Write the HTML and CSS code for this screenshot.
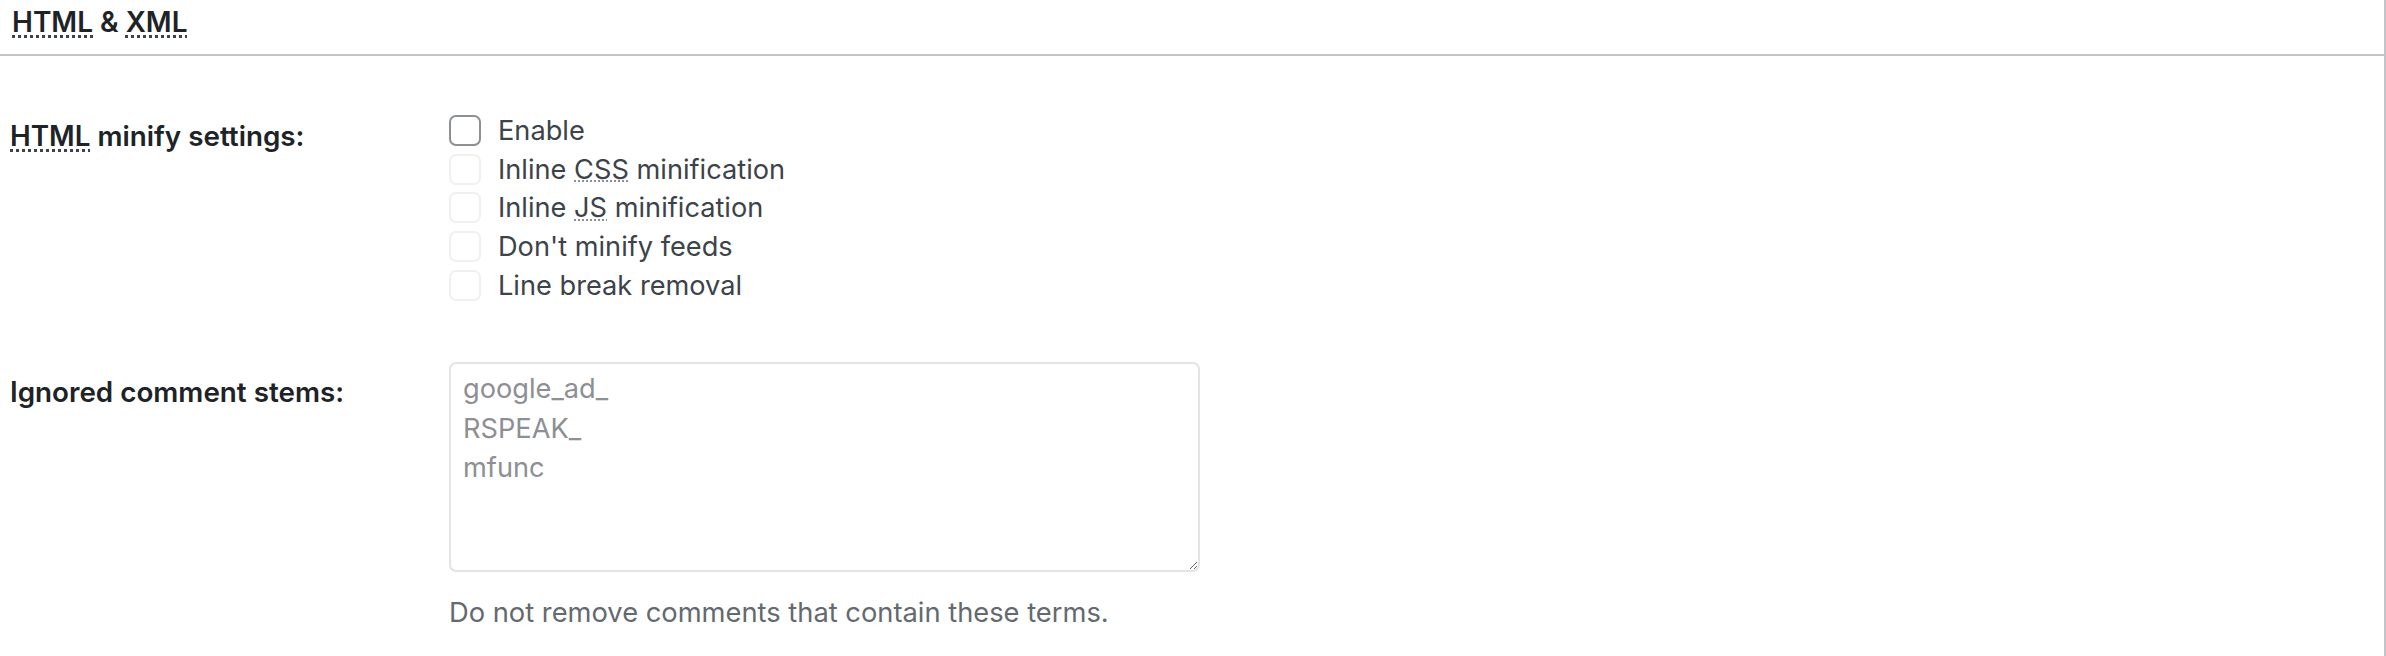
FILE: index.html
```html
<!DOCTYPE html>
<html lang="en">
<head>
<meta charset="utf-8">
<title>HTML &amp; XML</title>
<link rel="stylesheet" href="styles.css">
</head>
<body>
<div class="panel">
  <h3 class="panel-title"><abbr title="Hypertext Markup Language">HTML</abbr> &amp; <abbr title="eXtensible Markup Language">XML</abbr></h3>
  <div class="panel-body">
    <div class="form-row row-minify">
      <div class="label"><abbr title="Hypertext Markup Language">HTML</abbr> minify settings:</div>
      <div class="field">
        <label class="check"><span class="box box-active"></span><span>Enable</span></label>
        <label class="check"><span class="box"></span><span>Inline <abbr title="Cascading Style Sheet">CSS</abbr> minification</span></label>
        <label class="check"><span class="box"></span><span>Inline <abbr title="JavaScript">JS</abbr> minification</span></label>
        <label class="check"><span class="box"></span><span>Don't minify feeds</span></label>
        <label class="check"><span class="box"></span><span>Line break removal</span></label>
      </div>
    </div>
    <div class="form-row row-stems">
      <div class="label">Ignored comment stems:</div>
      <div class="field">
        <textarea class="stems" disabled>google_ad_
RSPEAK_
mfunc</textarea>
        <p class="description">Do not remove comments that contain these terms.</p>
      </div>
    </div>
  </div>
</div>
</body>
</html>
```

FILE: styles.css
```css
html, body {
  margin: 0;
  padding: 0;
  background: #ffffff;
}

body {
  font-family: Inter, "Noto Sans", "Liberation Sans", sans-serif;
  color: #1d2327;
  height: 656px;
  overflow: hidden;
}

.panel {
  width: 2384px;
  height: 656px;
  border-right: 2px solid #c3c4c7;
}

abbr {
  text-decoration-line: underline;
  text-decoration-style: dotted;
  text-decoration-thickness: 3px;
  text-decoration-color: #3c434a;
  text-underline-offset: 3px;
}

.field abbr {
  text-decoration-thickness: 2px;
  text-decoration-color: #8c8f94;
  text-underline-offset: 2px;
}

.panel-title {
  margin: 0;
  padding: 5px 0 0 12px;
  height: 56px;
  box-sizing: border-box;
  font-size: 28px;
  font-weight: 600;
  line-height: 34px;
  border-bottom: 2px solid #c3c4c7;
}

.panel-body {
  background: #ffffff;
  height: 598px;
}

.form-row {
  display: grid;
  grid-template-columns: 449px 1fr;
}

.label {
  padding-left: 10px;
  font-size: 27.8px;
  font-weight: 600;
  line-height: 36px;
}

.row-minify {
  padding-top: 55px;
}

.row-minify .label {
  padding-top: 7px;
}

.field {
  display: flex;
  flex-direction: column;
}

.check {
  display: flex;
  align-items: center;
  gap: 17px;
  height: 38.8px;
  font-size: 27.2px;
  color: #3c434a;
}

.box {
  width: 32px;
  height: 31px;
  box-sizing: border-box;
  border: 2px solid #f0f0f1;
  border-radius: 7px;
  background: #ffffff;
  flex: none;
}

.box-active {
  border-color: #8c8f94;
}

.row-stems {
  padding-top: 57px;
}

.row-stems .label {
  padding-top: 12px;
}

.stems {
  width: 751px;
  height: 210px;
  box-sizing: border-box;
  margin: 0;
  padding: 5px 12px;
  border: 2px solid #e4e4e6;
  border-radius: 7px;
  background: #ffffff;
  font-family: Inter, "Noto Sans", "Liberation Sans", sans-serif;
  font-size: 27.2px;
  line-height: 39.6px;
  color: #8c8f94;
  resize: both;
}

.description {
  margin: 23px 0 0 0;
  font-size: 27.3px;
  line-height: 36px;
  color: #646970;
}
```
